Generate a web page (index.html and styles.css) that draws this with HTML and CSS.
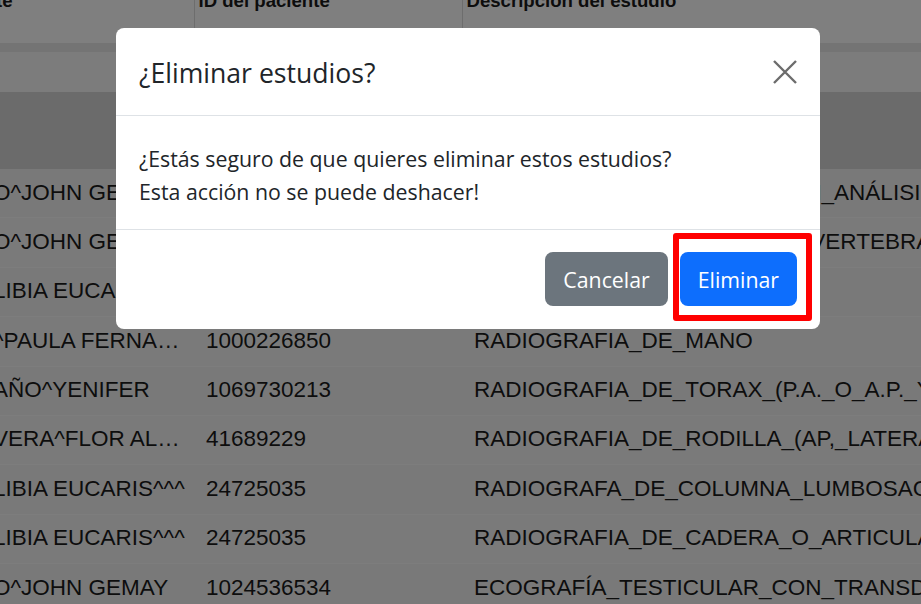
FILE: index.html
```html
<!DOCTYPE html>
<html lang="es">
<head>
  <meta charset="UTF-8" />
  <meta name="viewport" content="width=device-width, initial-scale=1.0"/>
  <title>Estudios</title>
  <link rel="stylesheet" href="styles.css">
</head>
<body>
  <div class="page">
    <table class="studies">
      <thead>
        <tr>
          <th class="col-name">te</th>
          <th class="col-id">ID del paciente</th>
          <th class="col-desc">Descripción del estudio</th>
        </tr>
      </thead>
      <tbody>
        <tr class="band band-line"><td colspan="3"></td></tr>
        <tr class="band band-light"><td colspan="3"></td></tr>
        <tr class="band band-dark"><td colspan="3"></td></tr>
        <tr><td class="col-name">O^JOHN GEMAY</td><td>1024536534</td><td>ECOGRAFIA_DE_RODILLA_CON_ANÁLISIS</td></tr>
        <tr><td class="col-name">O^JOHN GEMAY</td><td>1024536534</td><td>RADIOGRAFIA_DE_COLUMNA_VERTEBRAL</td></tr>
        <tr><td class="col-name">LIBIA EUCARIS^^^</td><td>24725035</td><td>RADIOGRAFIA_DE_PELVIS</td></tr>
        <tr><td class="col-name">^PAULA FERNA…</td><td>1000226850</td><td>RADIOGRAFIA_DE_MANO</td></tr>
        <tr><td class="col-name">AÑO^YENIFER</td><td>1069730213</td><td>RADIOGRAFIA_DE_TORAX_(P.A._O_A.P._Y_LATERAL)</td></tr>
        <tr><td class="col-name">VERA^FLOR AL…</td><td>41689229</td><td>RADIOGRAFIA_DE_RODILLA_(AP,_LATERAL)</td></tr>
        <tr><td class="col-name">LIBIA EUCARIS^^^</td><td>24725035</td><td>RADIOGRAFA_DE_COLUMNA_LUMBOSACRA</td></tr>
        <tr><td class="col-name">LIBIA EUCARIS^^^</td><td>24725035</td><td>RADIOGRAFIA_DE_CADERA_O_ARTICULACION</td></tr>
        <tr><td class="col-name">O^JOHN GEMAY</td><td>1024536534</td><td>ECOGRAFÍA_TESTICULAR_CON_TRANSDUCTOR</td></tr>
      </tbody>
    </table>
  </div>

  <div class="backdrop"></div>

  <div class="modal">
    <div class="modal-content">
      <div class="modal-header">
        <h5 class="modal-title">¿Eliminar estudios?</h5>
        <button type="button" class="btn-close" aria-label="Cerrar">
          <svg width="24" height="24" viewBox="0 0 24 24">
            <path d="M1 1L23 23M23 1L1 23" stroke="#6c6c6c" stroke-width="2.4" fill="none"/>
          </svg>
        </button>
      </div>
      <div class="modal-body">
        <p>¿Estás seguro de que quieres eliminar estos estudios?<br>Esta acción no se puede deshacer!</p>
      </div>
      <div class="modal-footer">
        <button type="button" class="btn btn-secondary">Cancelar</button>
        <button type="button" class="btn btn-primary">Eliminar</button>
      </div>
      <span class="highlight"></span>
    </div>
  </div>
</body>
</html>
```

FILE: styles.css
```css
html, body { margin: 0; height: 100%; overflow: hidden; }
body { font-family: "Liberation Sans", Arial, sans-serif; color: #1b1b1b; background: #fff; }

/* table behind the dialog, scrolled a little */
.page { margin-top: -10px; }
.studies { border-collapse: collapse; table-layout: fixed; width: 1300px; font-size: 22.5px; }
.studies th { height: 53px; box-sizing: border-box; padding: 0 0 0 4px; vertical-align: top; text-align: left; font-size: 18.6px; line-height: 22px; font-weight: bold; background: #fff; white-space: nowrap; overflow: hidden; }
.studies th.col-name { width: 194px; padding-left: 0; text-indent: -4px; border-right: 1px solid #dadada; }
.studies th.col-id { width: 268px; border-right: 1px solid #dadada; }
.studies td { padding: 10.5px 12px 12.5px; line-height: 25.375px; background: #f3f3f3; border-bottom: 1px solid #fbfbfb; white-space: nowrap; overflow: hidden; }
.studies td.col-name { padding-left: 0; padding-right: 8px; text-indent: -7px; text-overflow: ellipsis; }
.studies tr:nth-child(odd) td { background: #f5f5f5; }
.band td { padding: 0; border: 0; }
.band-line td { height: 9px; background: #e8e8e8 !important; }
.band-light td { height: 40px; background: #f8f8f8 !important; }
.band-dark td { height: 77px; background: #d6d6d6 !important; }

.backdrop { position: fixed; inset: 0; background: rgba(0, 0, 0, 0.5); }

/* dialog */
.modal { position: fixed; inset: 0; padding: 28px 0 0 116px; font-family: "Open Sans", "Noto Sans", sans-serif; color: #212529; }
.modal-content { position: relative; width: 704px; background: #fff; border-radius: 8px; }
.modal-header { display: flex; align-items: center; justify-content: space-between; height: 88px; box-sizing: border-box; padding: 0 23px; border-bottom: 1px solid #dee2e6; }
.modal-title { margin: 5px 0 0; font-size: 26.6px; font-weight: 400; line-height: 1.5; }
.btn-close { width: 24px; height: 24px; padding: 0; border: 0; background: none; display: flex; }
.modal-body { padding: 26px 23px 21px; }
.modal-body p { margin: 0; font-size: 21.3px; line-height: 33px; }
.modal-footer { display: flex; justify-content: flex-end; gap: 12px; padding: 22px 23px 23px; border-top: 1px solid #dee2e6; }
.btn { height: 54px; padding: 0 18px; border: 0; border-radius: 8px; font-family: inherit; font-size: 21.3px; color: #fff; cursor: pointer; }
.btn-secondary { background: #6c757d; }
.btn-primary { background: #0d6efd; }

/* red mark drawn over the screenshot */
.highlight { position: absolute; left: 557px; top: 205px; width: 139px; height: 88px; box-sizing: border-box; border: 6px solid #ff0000; border-radius: 3px; }
```
